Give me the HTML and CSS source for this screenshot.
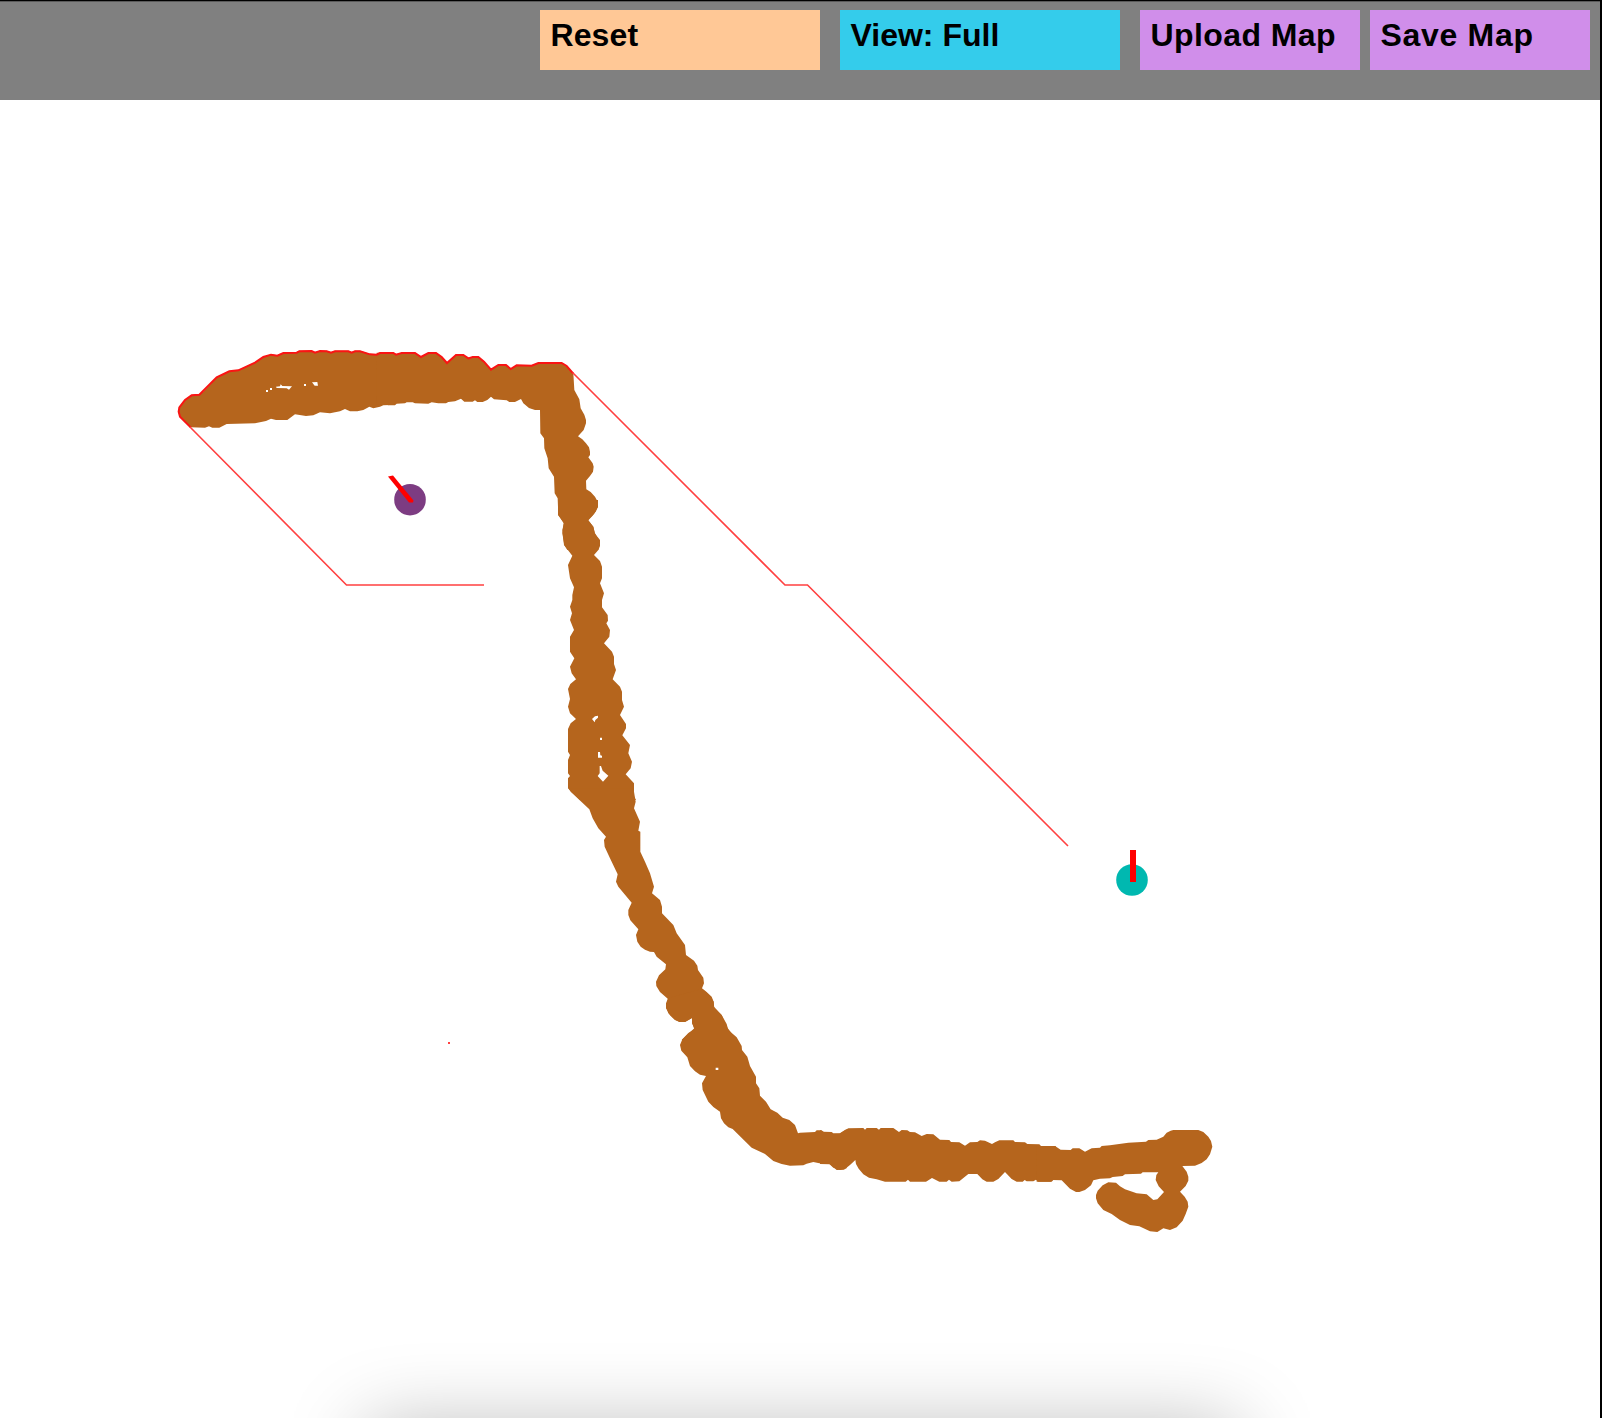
FILE: index.html
```html
<!DOCTYPE html>
<html lang="en">
<head>
<meta charset="utf-8">
<title>Map</title>
<link rel="stylesheet" href="styles.css">
</head>
<body>
<div class="window">
  <header class="toolbar">
    <button class="btn btn-reset">Reset</button>
    <button class="btn btn-view">View: Full</button>
    <div class="file-actions">
      <button class="btn btn-map upload">Upload Map</button>
      <button class="btn btn-map save">Save Map</button>
    </div>
  </header>
  <main class="canvas">
    <svg class="map" viewBox="0 100 1600 1318" width="1600" height="1318">
      <!-- terrain -->
      <g class="wall">
        <path transform="translate(170 340) scale(.33333)" d="M25 215L28 200 45 180 65 165 88 163 100 155 110 145 140 112 178 93 205 90 255 67 280 50 303 43 322 46 340 38 380 37 388 32 425 32 435 36 450 32 470 32 483 36 495 32 535 32 545 36 555 32 570 32 600 42 620 43 630 38 660 38V195L640 196 630 200 610 205 598 200 580 210 562 214H540L525 207 510 214 480 220 450 217 430 226 408 228 375 223 352 240H318L303 236 288 243 255 250 170 252 148 263H127L117 259 105 263 62 262 30 230ZM318 140L330 139 332 133 337 138 366 139 357 149 350 145 320 144ZM426 127L442 126 444 137 434 137ZM402 132h6v6h-6ZM300 144h6v6h-6ZM288 150h6v6h-6Z"/>
        <path transform="translate(380 340) scale(.33333)" d="M-10 38H40L48 43 65 38H105L123 50 145 38H168L185 50 201 68 228 44H250L265 54 278 50H295L312 64 333 90 355 74H378L392 86 410 75 455 76 475 68H545L560 77 580 100 583 150 598 178 602 205 613 224 618 240V250L611 270 594 289 607 298 618 310 627 322 630 335V345L625 352 638 370 641 380 639 395 630 408 618 422 619 448 632 456 645 470 652 483 654 495 648 514 637 528 625 541 640 560 645 580 659 605 655 630H562L553 615 547 580 551 550 535 525 533 475 524 460 522 410 506 385 503 355 493 325 492 295 481 280 480 210H465L447 204 430 190 423 177 405 186H388L380 181 342 178 333 170 322 180 308 186H292L285 181 278 185H253L243 176 225 184 205 186 198 190H175L155 187 145 191 105 190 98 187H80L75 190 50 191 45 196H25L15 193-10 195Z"/>
        <path transform="translate(540 500) scale(.33333)" d="M54 0V45L72 68 67 90 72 135 97 167 84 195 90 235 102 262 97 285V300L90 320 96 340 90 360 102 390 90 410V455L103 475 90 500 95 520 108 538 91 552 84 567 90 597 84 620 90 640 108 657 92 670 84 687V755L90 765 84 780V820L90 828 84 835V865L120 900H288L277 880 282 872V850L257 823 272 805 276 785 265 760 270 735 247 706 258 685V672L240 645 252 620 246 600V575L240 560 218 538 228 510 222 492V470L216 455 192 430 208 410 210 390 199 370 204 362 203 345 186 322V300L192 280 180 250 186 235V200L180 183 162 165 175 150 180 138V120L164 100 160 80 144 60 162 42 174 22V0ZM156 657L165 649 174 647V653L166 660 164 667ZM180 713h6v7h-6ZM174 756H180L181 766 186 767V773H174ZM179 798H183L188 812 205 827 189 845 173 828 179 820Z"/>
        <path transform="translate(550 740) scale(.33333)" d="M55 145L62 155 118 208 128 235 145 265 168 290 162 300 164 320 180 355 203 403 198 425 205 440 245 488 235 510V525L241 541 265 568 258 585 262 605 272 620 285 629 300 635 312 636 320 650 348 673 346 688 327 706 318 725 319 738 330 756 354 777 348 800 355 820 375 839 388 846H405L426 834V850L433 865 395 900H560L530 860 515 825 493 805 491 785 485 770 470 756 456 745 462 730 460 713 444 690 442 677 432 662 408 645 405 615 380 580 370 555 336 520V500L330 480 306 460 312 440 300 400 285 365 271 335V275L265 272 270 245 252 205 257 185 252 155V145Z"/>
        <path transform="translate(660 960) scale(.33333)" d="M24 115L18 130V145L30 166 45 180 60 186H75L96 174 97 190 103 208 85 219 67 238 60 255 64 272 82 292 90 318 105 334 120 344 138 348 126 370 128 390 145 425 160 441 180 455 183 475 192 490 205 502 218 507 275 563 315 582 340 603 365 612 390 617 430 616 440 611 460 606 478 610 508 612 520 623 540 630 560 625V507L540 520H520L515 516 490 515 485 511H470L465 516 420 518 414 520 405 495 388 480 368 473 352 458 332 448 318 425 300 407 298 385 288 370V350L270 318 262 290 246 270 245 258 230 232 205 210 200 192 185 165 162 140 161 125 150 108 126 86ZM167 323h8v7h-8Z"/>
        <path transform="translate(820 1110) scale(.33333)" d="M0 60L12 66 40 72 58 71 72 62 85 55 130 54 135 59 140 54H170L177 59 182 54H220L237 66 245 60 262 61 270 66 285 67 305 78 320 72 340 73 360 89 388 90 393 96 418 97 435 107 450 97 472 96 480 91 495 92 516 102 525 97 538 91H580L585 96 615 97 622 102 658 103 663 108 708 109V210H700L695 215H655L648 209 640 214H620L614 210 608 215H590L575 207 555 186 535 207 520 215H500L487 208 472 192H445L418 214 395 215 387 209 380 215H358L336 204 318 215H270L264 209 257 215H195L170 208 147 203 130 193 116 176 108 162 106 150 90 165 72 179 50 180 30 163 0 162Z"/>
        <path transform="translate(1040 1110) scale(.33333)" d="M-10 108H45L62 119 92 120 98 115H118L135 125 155 115 180 113 185 108 210 106 265 98 318 95 325 90 350 89 370 80 380 68 392 62 400 60H475L490 66 505 80 513 93 517 110 510 133 500 148 485 159 465 167 427 168 440 185 445 200V212L437 228 420 245 434 260 443 275 445 290 437 312 428 332 410 352 390 360 370 355 352 366 330 364 298 349 270 345 240 330 215 312 190 300 173 280 168 265V255L173 242 188 226 205 217 228 218 240 229 255 238 290 250 320 253 340 270 352 268 372 246 356 229 347 210 349 195 355 187H308L303 191 255 193 248 198 218 201 210 205 180 206 160 211 153 226 135 240 118 246H108L90 236 65 211 38 210 32 215H-10Z"/>
      </g>
      <!-- planned route: hugging the terrain, then across open ground -->
      <g class="route">
        <path transform="translate(170 340) scale(.33333)" d="M62 262L30 230 26 215 28 202 45 180 65 166 88 164 140 112 178 94 205 91 255 68 280 51 303 44 322 47 340 39 380 38 388 34 425 33 435 38 450 33 470 34 483 38 495 34H535L545 38 555 34 570 34 600 43 620 44 630 39H670L678 44 695 39H735L753 51 775 39H798L815 51 831 69 858 45H880L895 55 908 51H925L942 65 963 89 985 75H1008L1022 87 1040 76 1085 77 1105 69H1175L1190 78 1210 101"/>
      </g>
      <path class="route-open" d="M190 427L346.500 585H484M572.500 372.500L785 585H807.500L1068 846"/>
      <rect class="point" x="448" y="1042" width="2" height="2"/>
      <!-- robots with their headings -->
      <circle class="robot-a" cx="410" cy="499.700" r="15.800"/>
      <path class="heading" d="M388 476.500L393 475.500 413.500 500.500 413 502.500 409 502.500Z"/>
      <circle class="robot-b" cx="1132" cy="880" r="15.800"/>
      <rect class="heading" x="1130" y="850" width="6" height="32"/>
    </svg>
  </main>
</div>
</body>
</html>
```
FILE: styles.css
```css
* {
  box-sizing: border-box;
}

body {
  margin: 0;
  background: #fff;
  font-family: "Liberation Sans", Arial, sans-serif;
}

.window {
  position: relative;
  width: 1602px;
  height: 1418px;
  overflow: hidden;
  border-top: 1px solid #000;
  border-right: 2px solid #000;
}

.toolbar {
  display: flex;
  justify-content: flex-end;
  align-items: flex-start;
  gap: 20px;
  height: 99px;
  padding: 8px 10px 0 0;
  background: #808080;
  border-top: 1px solid #5a5a5a;
}

.file-actions {
  display: flex;
  gap: 10px;
}

.btn {
  width: 280px;
  height: 60px;
  margin: 0;
  padding: 7px 0 0 10.5px;
  border: 0;
  color: #000;
  font: bold 32px/37px "Liberation Sans", Arial, sans-serif;
  text-align: left;
  display: flex;
  align-items: flex-start;
  white-space: nowrap;
}

.btn-reset {
  background: #ffc896;
  letter-spacing: 0.1px;
}

.btn-view {
  background: #34cceb;
}

.btn-map {
  width: 220px;
  background: #d08eea;
}

.upload {
  letter-spacing: 0.4px;
}

.save {
  letter-spacing: 0.7px;
}

.canvas {
  height: 1318px;
  background: #fff;
}

/* shadow cast by a panel just below the visible area */
.canvas::after {
  content: "";
  position: absolute;
  left: 366px;
  top: 1425px;
  width: 872px;
  height: 200px;
  box-shadow: 0 0 80px rgba(0, 0, 0, 0.27);
}

.map {
  display: block;
}

.wall {
  fill: #b5651d;
  fill-rule: evenodd;
}

.route {
  fill: none;
  stroke: #fa1414;
  stroke-width: 6;
}

.route-open {
  fill: none;
  stroke: #ff4040;
  stroke-width: 1.6;
}

.point {
  fill: #ff4040;
}

.robot-a {
  fill: #7d3c82;
}

.robot-b {
  fill: #00b8b0;
}

.heading {
  fill: #f00;
}
```
